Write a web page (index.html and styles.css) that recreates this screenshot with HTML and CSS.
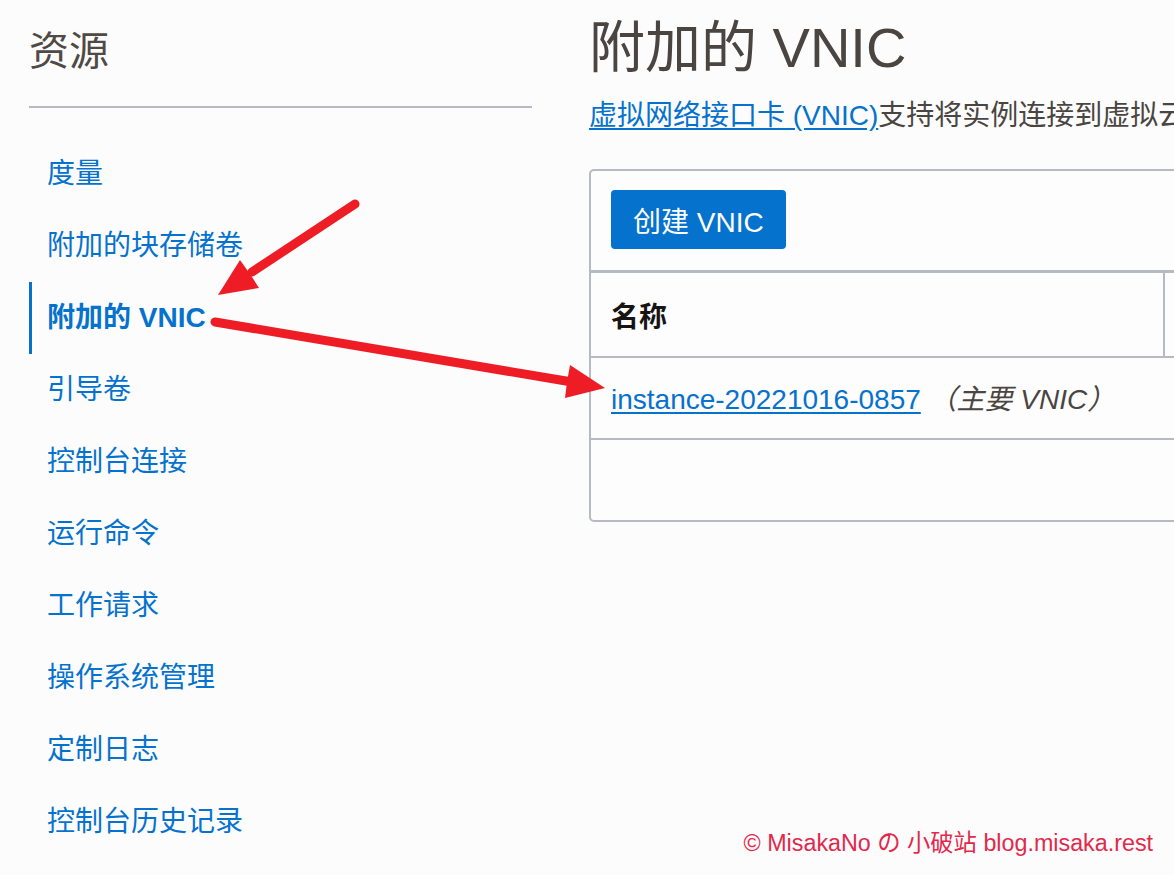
FILE: index.html
```html
<!DOCTYPE html>
<html lang="zh-CN">
<head>
<meta charset="utf-8">
<title>附加的 VNIC</title>
<link rel="stylesheet" href="styles.css">
</head>
<body>
<div class="page">
  <aside class="sidebar">
    <h2 class="side-title">资源</h2>
    <nav class="side-nav">
      <a class="nav-item">度量</a>
      <a class="nav-item">附加的块存储卷</a>
      <a class="nav-item active">附加的 VNIC</a>
      <a class="nav-item">引导卷</a>
      <a class="nav-item">控制台连接</a>
      <a class="nav-item">运行命令</a>
      <a class="nav-item">工作请求</a>
      <a class="nav-item">操作系统管理</a>
      <a class="nav-item">定制日志</a>
      <a class="nav-item">控制台历史记录</a>
    </nav>
  </aside>
  <main class="main">
    <h1 class="title">附加的 VNIC</h1>
    <p class="desc"><a class="link">虚拟网络接口卡 (VNIC)</a>支持将实例连接到虚拟云网络 (VCN) 中的子网。</p>
    <section class="card">
      <div class="toolbar">
        <button class="btn-primary">创建 VNIC</button>
      </div>
      <table class="grid">
        <thead>
          <tr><th class="col-name">名称</th><th class="col-rest"></th></tr>
        </thead>
        <tbody>
          <tr><td class="col-name"><a class="link">instance-20221016-0857</a> <em class="primary-tag">（主要 VNIC）</em></td><td class="col-rest"></td></tr>
        </tbody>
      </table>
      <div class="card-foot"></div>
    </section>
  </main>
</div>
<svg class="arrows" width="1174" height="875" viewBox="0 0 1174 875">
  <line x1="355" y1="204" x2="252" y2="272" stroke="#ee1d25" stroke-width="9" stroke-linecap="round"/>
  <polygon points="218,295 240,260 250,274 259,288" fill="#ee1d25"/>
  <line x1="215" y1="322" x2="572" y2="382" stroke="#ee1d25" stroke-width="9" stroke-linecap="round"/>
  <polygon points="605,388 570,365 567,382 565,398" fill="#ee1d25"/>
</svg>
<div class="watermark">© MisakaNo の 小破站 blog.misaka.rest</div>
</body>
</html>
```

FILE: styles.css
```css
html, body {
  margin: 0;
  padding: 0;
  overflow: hidden;
  width: 1174px;
  height: 875px;
}
body {
  background: #fcfcfc;
  font-family: "Liberation Sans", "Noto Sans CJK SC", sans-serif;
  color: #4a4541;
  position: relative;
}
.page {
  display: flex;
  gap: 57px;
  padding-left: 29px;
}
.sidebar {
  flex: 0 0 503px;
}
.side-title {
  margin: 0;
  padding: 31px 0 35px;
  font-size: 40px;
  line-height: 40px;
  font-weight: 400;
  color: #4f4a46;
  border-bottom: 2px solid #b6bac3;
}
.side-nav {
  display: flex;
  flex-direction: column;
  margin-top: 30px;
}
.nav-item {
  display: block;
  height: 72px;
  line-height: 72px;
  padding-left: 18px;
  font-size: 28px;
  color: #0572ce;
  white-space: nowrap;
}
.nav-item.active {
  font-weight: 700;
  border-left: 3px solid #0572ce;
  padding-left: 15px;
}
.main {
  flex: 0 0 760px;
}
.title {
  margin: 0;
  padding-top: 20px;
  font-size: 56px;
  line-height: 56px;
  font-weight: 400;
  color: #4a4541;
  white-space: nowrap;
}
.desc {
  margin: 22px 0 0;
  font-size: 28px;
  line-height: 36px;
  white-space: nowrap;
  color: #4a4541;
}
.link {
  color: #0572ce;
  text-decoration: underline;
  text-underline-offset: 3px;
}
.card {
  margin-top: 35px;
  border: 2px solid #b6bac3;
  border-radius: 5px;
  width: 740px;
  background: #fdfdfd;
}
.toolbar {
  padding: 19px 20px 21px;
  border-bottom: 3px solid #b6bac3;
}
.btn-primary {
  display: inline-flex;
  align-items: center;
  height: 59px;
  padding: 0 22px;
  border: none;
  border-radius: 4px;
  background: #0572ce;
  color: #ffffff;
  font-family: "Liberation Sans", "Noto Sans CJK SC", sans-serif;
  font-size: 28px;
}
.grid {
  width: 100%;
  border-collapse: separate;
  border-spacing: 0;
  font-size: 28px;
}
.grid th {
  height: 83px;
  padding: 0 0 0 20px;
  text-align: left;
  font-weight: 700;
  color: #161513;
  border-bottom: 2px solid #b6bac3;
}
.grid th.col-name {
  width: 552px;
  border-right: 2px solid #b6bac3;
}
.grid td {
  height: 82px;
  padding: 0 0 3px 20px;
  box-sizing: border-box;
  border-bottom: 2px solid #b6bac3;
  white-space: nowrap;
}
.primary-tag {
  font-style: italic;
  color: #4a4541;
}
.card-foot {
  height: 80px;
}
.arrows {
  position: absolute;
  left: 0;
  top: 0;
  pointer-events: none;
}
.watermark {
  position: absolute;
  right: 21px;
  bottom: 17px;
  font-size: 23.3px;
  color: #e2294c;
  font-family: "Liberation Sans", "Noto Sans CJK JP", sans-serif;
  white-space: nowrap;
}
```
